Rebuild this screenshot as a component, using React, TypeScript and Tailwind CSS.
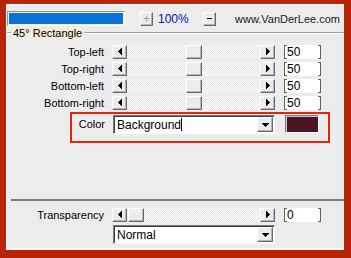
const btn =
  "bg-[#ececec] border border-t-white border-l-white border-r-[#6a6a6a] border-b-[#6a6a6a] shadow-[inset_-1px_-1px_0_#b4b4b4] flex items-center justify-center";

function LeftArrow() {
  return (
    <svg width="4" height="7" viewBox="0 0 4 7" shapeRendering="crispEdges">
      <path d="M4 0V7L0 3.5Z" fill="#000" />
    </svg>
  );
}

function RightArrow() {
  return (
    <svg width="4" height="7" viewBox="0 0 4 7" shapeRendering="crispEdges">
      <path d="M0 0V7L4 3.5Z" fill="#000" />
    </svg>
  );
}

function DownArrow() {
  return (
    <svg width="7" height="4" viewBox="0 0 7 4" shapeRendering="crispEdges">
      <path d="M0 0H7L3.5 4Z" fill="#000" />
    </svg>
  );
}

function NumField({ value }: { value: string }) {
  return (
    <div className="relative w-[37px] h-[14px] bg-white pl-[3px] leading-[14px] text-[12px]">
      <span className="absolute left-0 top-0 bottom-0 w-[3px] border-l border-t border-b border-[#606060]" />
      <span className="absolute right-0 top-0 bottom-0 w-[3px] border-r border-t border-b border-[#606060]" />
      {value}
    </div>
  );
}

function Slider({ label, thumb, value }: { label: string; thumb: number; value: string }) {
  return (
    <div className="h-[17px] flex items-center">
      <div className="w-[98px] text-right pr-[1px] leading-[14px]">{label}</div>
      <div className={`ml-[7px] w-[15px] h-[14px] ${btn}`}>
        <LeftArrow />
      </div>
      <div className="w-[133px] h-[14px] flex bg-[image:repeating-conic-gradient(#ffffff_0_25%,#e4e4e4_0_50%)] bg-[length:2px_2px]">
        <div className={`h-[14px] w-[16px] ${btn}`} style={{ marginLeft: thumb }} />
      </div>
      <div className={`w-[15px] h-[14px] ${btn}`}>
        <RightArrow />
      </div>
      <div className="ml-[9px]">
        <NumField value={value} />
      </div>
    </div>
  );
}

function Dropdown({ text, caret }: { text: string; caret?: boolean }) {
  return (
    <div className="w-[162px] h-[19px] bg-white border border-t-[#7a7a7a] border-l-[#7a7a7a] border-r-white border-b-white shadow-[inset_1px_1px_0_#3c3c3c] flex items-center pl-[3px] pr-[1px]">
      <span className="leading-[14px] text-[12px]">{text}</span>
      {caret && <span className="w-px h-[13px] bg-black" />}
      <div className={`ml-auto w-[16px] h-[15px] ${btn}`}>
        <DownArrow />
      </div>
    </div>
  );
}

export default function App() {
  return (
    <div className="w-[351px] h-[258px] bg-[#b72407] pt-[4px] pl-[6px] pr-[7px] pb-[8px] font-['Liberation_Sans',Arial,sans-serif] text-[11px] text-black">
      <div className="h-full bg-[#ececec] border-t border-l border-white border-b-2 border-b-[#fafafa] flex flex-col">
        {/* Top bar */}
        <div className="mt-[6px] h-[15px] flex items-center">
          <div className="w-[118px] h-[15px] border border-t-[#909090] border-l-[#909090] border-r-white border-b-white p-[1px]">
            <div className="h-full bg-[#0a74d6]" />
          </div>
          <div className={`ml-[15px] w-[13px] h-[14px] ${btn} text-[#9a9a9a] text-[12px] leading-none`}>+</div>
          <div className="ml-[5px] w-[45px] text-[12px] text-[#0c0cbc] leading-[14px]">100%</div>
          <div className={`w-[13px] h-[14px] ${btn}`}>
            <span className="w-[5px] h-px bg-black" />
          </div>
          <div className="ml-[19px] text-[#1a1a1a] leading-[14px]">www.VanDerLee.com</div>
        </div>

        {/* Group header */}
        <div className="h-[14px] flex items-center">
          <div className="w-[4px] h-[2px] border-t border-t-[#a0a0a0] border-b border-b-white" />
          <div className="px-[2px] bg-[#f1ecdc] leading-[14px] h-[14px]">45° Rectangle</div>
          <div className="flex-1 h-[2px] border-t border-t-[#a0a0a0] border-b border-b-white" />
        </div>

        <div className="mt-[3px] flex flex-col">
          <Slider label="Top-left" thumb={59} value="50" />
          <Slider label="Top-right" thumb={59} value="50" />
          <Slider label="Bottom-left" thumb={59} value="50" />
          <Slider label="Bottom-right" thumb={59} value="50" />
        </div>

        {/* Color row */}
        <div className="mt-[1px] ml-[63px] w-[260px] h-[31px] border-2 border-[#e5260d] flex items-start pt-[1px]">
          <div className="w-[33px] text-right leading-[19px]">Color</div>
          <div className="ml-[8px]">
            <Dropdown text="Background" caret />
          </div>
          <div className="ml-[10px] w-[34px] h-[18px] border border-t-[#808080] border-l-[#808080] border-r-white border-b-white bg-[#4b1521] shadow-[inset_1px_1px_0_#c8c8c8]" />
        </div>

        {/* Separator */}
        <div className="mt-[56px] ml-[4px] h-[2px] bg-[#7c7c7c]" />

        <div className="mt-[5px]">
          <Slider label="Transparency" thumb={1} value="0" />
        </div>
        <div className="mt-[2px] ml-[106px]">
          <Dropdown text="Normal" />
        </div>
      </div>
    </div>
  );
}
